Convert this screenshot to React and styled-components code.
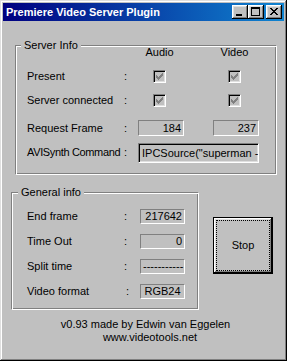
import React from 'react';
import styled, { createGlobalStyle } from 'styled-components';

const GlobalStyle = createGlobalStyle`
  html, body { margin: 0; padding: 0; background: #c0c0c0; }
  body {
    font-family: "Liberation Sans", Arial, sans-serif;
    font-size: 11px;
    color: #000;
  }
  * { box-sizing: border-box; }
`;

const Window = styled.div`
  width: 287px;
  height: 361px;
  padding: 3px;
  background: #c0c0c0;
  display: flex;
  flex-direction: column;
  box-shadow: inset -1px -1px 0 #000, inset 1px 1px 0 #dfdfdf,
    inset -2px -2px 0 #808080, inset 2px 2px 0 #fff;
`;

const TitleBar = styled.div`
  height: 18px;
  flex: none;
  display: flex;
  align-items: center;
  padding: 0 2px 0 3px;
  background: linear-gradient(90deg, #000080, #1084d0);
  color: #fff;
  font-weight: bold;
  font-size: 11px;
`;

const TitleText = styled.span`
  flex: 1;
  line-height: 18px;
  white-space: nowrap;
`;

const CaptionButton = styled.div`
  width: 16px;
  height: 14px;
  margin-left: ${(p) => p.$gap || 0}px;
  background: #c0c0c0;
  box-shadow: inset -1px -1px 0 #000, inset 1px 1px 0 #fff,
    inset -2px -2px 0 #808080, inset 2px 2px 0 #dfdfdf;
  svg { display: block; }
`;

const Body = styled.div`
  display: flex;
  flex-direction: column;
`;

const GroupBox = styled.div`
  width: ${(p) => p.$w}px;
  height: ${(p) => p.$h}px;
  margin: ${(p) => p.$margin};
  border: 1px solid;
  border-color: #808080 #fff #fff #808080;
  box-shadow: inset 1px 1px 0 #fff, inset -1px -1px 0 #808080;
  display: flex;
  flex-direction: column;
  flex: none;
`;

const GroupTitle = styled.div`
  align-self: flex-start;
  margin: -7px 0 -6px ${(p) => p.$ml}px;
  padding: 0 3px;
  background: #c0c0c0;
  line-height: 13px;
  white-space: nowrap;
`;

const Rows = styled.div`
  padding-left: ${(p) => p.$pl}px;
  display: flex;
  flex-direction: column;
`;

const InfoRow = styled.div`
  display: grid;
  grid-template-columns: ${(p) => p.$cols};
  align-items: center;
  height: ${(p) => p.$h}px;
  margin-top: ${(p) => p.$mt}px;
  line-height: 13px;
`;

const Label = styled.span`
  white-space: nowrap;
  letter-spacing: ${(p) => (p.$tight ? '-0.35px' : 'normal')};
  margin-top: ${(p) => p.$dy || 0}px;
`;

const Colon = styled.span`
  padding-left: ${(p) => p.$shift || 0}px;
  margin-top: ${(p) => p.$dy || 0}px;
`;

const HeadCell = styled.span`
  grid-column: ${(p) => p.$col};
  text-align: center;
  padding-right: 3px;
`;

const CheckCell = styled.span`
  grid-column: ${(p) => p.$col};
  display: flex;
  justify-content: center;
  padding-right: 3px;
`;

const CheckFrame = styled.span`
  width: 13px;
  height: 13px;
  display: block;
  background: #c0c0c0;
  border: 1px solid;
  border-color: #808080 #fff #fff #808080;
  box-shadow: inset 1px 1px 0 #000, inset -1px -1px 0 #dfdfdf;
  svg { display: block; }
`;

const ReadField = styled.div`
  grid-column: ${(p) => p.$col || 'auto'};
  height: ${(p) => p.$h}px;
  line-height: ${(p) => p.$h - 2}px;
  border: 1px solid;
  border-color: #808080 #fff #fff #808080;
  background: #c0c0c0;
  text-align: ${(p) => p.$align || 'right'};
  padding: 0 2px;
  white-space: nowrap;
  overflow: hidden;
`;

const EditField = styled.div`
  grid-column: 3 / 6;
  height: 20px;
  line-height: 16px;
  border: 1px solid;
  border-color: #808080 #fff #fff #808080;
  box-shadow: inset 1px 1px 0 #000, inset -1px -1px 0 #dfdfdf;
  background: #c0c0c0;
  padding: 1px 2px 0 3px;
  white-space: nowrap;
  overflow: hidden;
`;

const LowerRow = styled.div`
  display: flex;
  align-items: flex-start;
  margin: 17px 0 0 8px;
`;

const StopButton = styled.button`
  width: 60px;
  height: 57px;
  margin: 25px 0 0 14px;
  padding: 2px;
  border: 1px solid #000;
  background: #c0c0c0;
  font: inherit;
  color: #000;
  display: flex;
  box-shadow: inset -1px -1px 0 #000, inset 1px 1px 0 #fff,
    inset -2px -2px 0 #808080, inset 2px 2px 0 #dfdfdf;
`;

const FocusRing = styled.span`
  flex: 1;
  border: 1px dotted #000;
  display: flex;
  align-items: center;
  justify-content: center;
  padding-bottom: 1px;
`;

const Footer = styled.div`
  margin-top: 8px;
  display: flex;
  flex-direction: column;
  align-items: center;
  line-height: 13px;
`;

const FooterLine = styled.div`
  padding-left: ${(p) => p.$shift}px;
  white-space: nowrap;
`;

const px = (x, y, w = 1, h = 1, key) => (
  <rect key={key} x={x} y={y} width={w} height={h} />
);

const MinGlyph = () => (
  <svg width="16" height="14" viewBox="0 0 16 14" shapeRendering="crispEdges" fill="#000">
    {px(4, 9, 6, 2)}
  </svg>
);

const MaxGlyph = () => (
  <svg width="16" height="14" viewBox="0 0 16 14" shapeRendering="crispEdges" fill="#000">
    {px(3, 2, 9, 2, 'a')}
    {px(3, 2, 1, 9, 'b')}
    {px(11, 2, 1, 9, 'c')}
    {px(3, 10, 9, 1, 'd')}
  </svg>
);

const closeRows = [
  [[0, 2], [6, 2]],
  [[1, 2], [5, 2]],
  [[2, 4]],
  [[3, 2]],
  [[2, 4]],
  [[1, 2], [5, 2]],
  [[0, 2], [6, 2]],
];

const CloseGlyph = () => (
  <svg width="16" height="14" viewBox="0 0 16 14" shapeRendering="crispEdges" fill="#000">
    {closeRows.flatMap((segs, r) =>
      segs.map(([x, w], i) => px(4 + x, 3 + r, w, 1, `${r}-${i}`))
    )}
  </svg>
);

const checkCols = [
  [3, 5], [4, 6], [5, 7], [6, 6], [7, 5], [8, 4], [9, 3],
];

const DisabledCheck = () => (
  <CheckFrame>
    <svg width="11" height="11" viewBox="1 1 11 11" shapeRendering="crispEdges" fill="#808080">
      {checkCols.map(([x, y]) => px(x, y, 1, 3, x))}
    </svg>
  </CheckFrame>
);

const COLS1 = '97px 14px 46px 29px 46px';
const COLS2 = '97px 16px 45px';

const generalRows = [
  { label: 'End frame', value: '217642', align: 'right', mt: 16 },
  { label: 'Time Out', value: '0', align: 'right', mt: 10 },
  { label: 'Split time', value: '-----------', align: 'center', mt: 10 },
  { label: 'Video format', value: 'RGB24', align: 'center', mt: 10, shift: 2 },
];

export default function App() {
  return (
    <>
      <GlobalStyle />
      <Window>
        <TitleBar>
          <TitleText>Premiere Video Server Plugin</TitleText>
          <CaptionButton><MinGlyph /></CaptionButton>
          <CaptionButton><MaxGlyph /></CaptionButton>
          <CaptionButton $gap={2}><CloseGlyph /></CaptionButton>
        </TitleBar>
        <Body>
          <GroupBox $w={262} $h={130} $margin="24px 0 0 12px">
            <GroupTitle $ml={5}>Server Info</GroupTitle>
            <Rows $pl={11}>
              <InfoRow $cols={COLS1} $h={13} $mt={0}>
                <HeadCell $col={3}>Audio</HeadCell>
                <HeadCell $col={5}>Video</HeadCell>
              </InfoRow>
              <InfoRow $cols={COLS1} $h={13} $mt={11}>
                <Label>Present</Label>
                <Colon>:</Colon>
                <CheckCell $col={3}><DisabledCheck /></CheckCell>
                <CheckCell $col={5}><DisabledCheck /></CheckCell>
              </InfoRow>
              <InfoRow $cols={COLS1} $h={13} $mt={11}>
                <Label>Server connected</Label>
                <Colon>:</Colon>
                <CheckCell $col={3}><DisabledCheck /></CheckCell>
                <CheckCell $col={5}><DisabledCheck /></CheckCell>
              </InfoRow>
              <InfoRow $cols={COLS1} $h={16} $mt={13}>
                <Label>Request Frame</Label>
                <Colon>:</Colon>
                <ReadField $col={3} $h={16}>184</ReadField>
                <ReadField $col={5} $h={16}>237</ReadField>
              </InfoRow>
              <InfoRow $cols={COLS1} $h={20} $mt={7}>
                <Label $tight $dy={-2}>AVISynth Command</Label>
                <Colon $dy={-2}>:</Colon>
                <EditField>IPCSource("superman - trailer.avi")</EditField>
              </InfoRow>
            </Rows>
          </GroupBox>
          <LowerRow>
            <GroupBox $w={188} $h={118} $margin="0">
              <GroupTitle $ml={6}>General info</GroupTitle>
              <Rows $pl={15}>
                {generalRows.map((r) => (
                  <InfoRow key={r.label} $cols={COLS2} $h={15} $mt={r.mt}>
                    <Label>{r.label}</Label>
                    <Colon $shift={r.shift}>:</Colon>
                    <ReadField $h={15} $align={r.align}>{r.value}</ReadField>
                  </InfoRow>
                ))}
              </Rows>
            </GroupBox>
            <StopButton>
              <FocusRing>Stop</FocusRing>
            </StopButton>
          </LowerRow>
          <Footer>
            <FooterLine $shift={4}>v0.93 made by Edwin van Eggelen</FooterLine>
            <FooterLine $shift={13}>www.videotools.net</FooterLine>
          </Footer>
        </Body>
      </Window>
    </>
  );
}
